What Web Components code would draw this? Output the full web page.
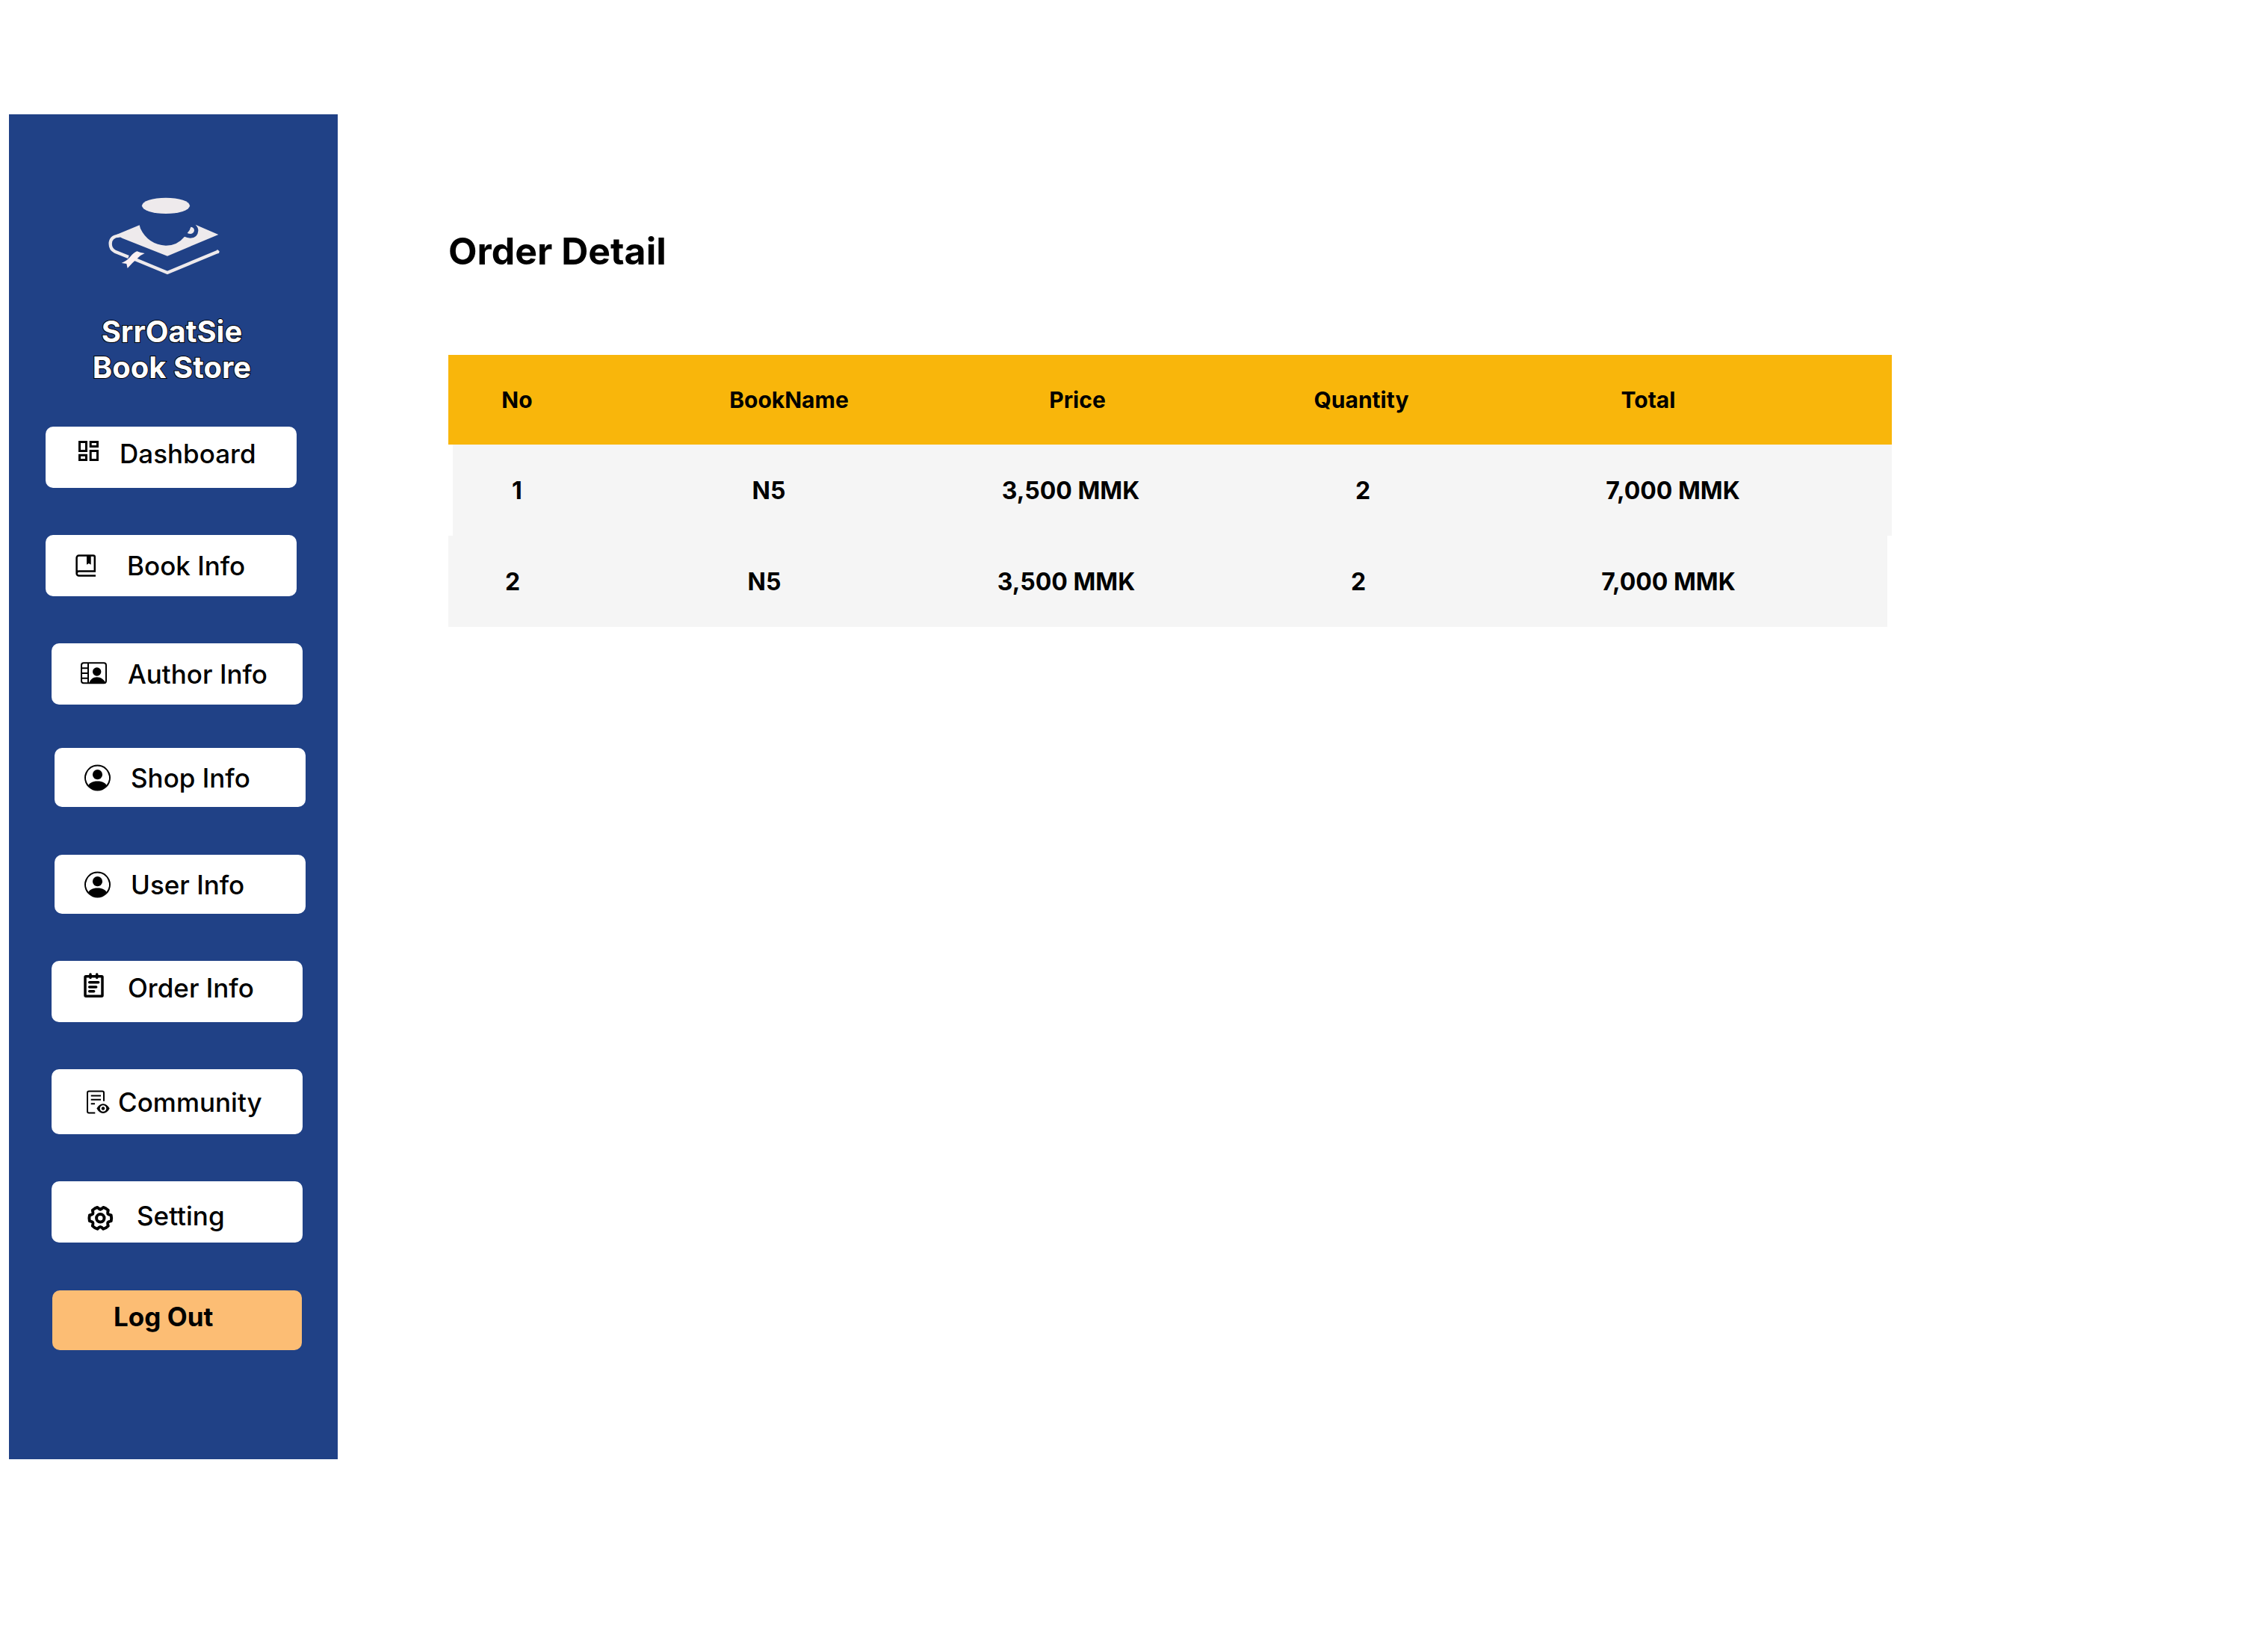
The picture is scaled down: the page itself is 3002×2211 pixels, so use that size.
<!DOCTYPE html>
<html lang="en">
<head>
<meta charset="utf-8">
<meta name="viewport" content="width=device-width, initial-scale=1">
<title>SrrOatSie Book Store – Order Detail</title>
<style>
  body { margin: 0; background: #fff; color: #000; font-family: Inter, "Liberation Sans", sans-serif; }
</style>
</head>
<body>
<store-app>
  <side-bar slot="side">
    <store-brand slot="brand">SrrOatSie<br>Book Store</store-brand>
    <nav-group>
      <nav-item icon="dashboard" shift="up" gap="s">Dashboard</nav-item>
      <nav-item icon="book" gap="l">Book Info</nav-item>
      <nav-item icon="author" indent="1">Author Info</nav-item>
    </nav-group>
    <nav-group class="people">
      <nav-item icon="person" indent="2" size="s">Shop Info</nav-item>
      <nav-item icon="person" indent="2" size="s">User Info</nav-item>
    </nav-group>
    <nav-group>
      <nav-item icon="order" indent="1" shift="up">Order Info</nav-item>
      <nav-item icon="community" indent="1" size="l" gap="xs">Community</nav-item>
      <nav-item icon="setting" indent="1" shift="down" gap="xl">Setting</nav-item>
    </nav-group>
    <log-out slot="foot">Log Out</log-out>
  </side-bar>
  <order-detail></order-detail>
</store-app>

<script>
const define = (name, html) => {
  const template = document.createElement('template');
  template.innerHTML = html;
  customElements.define(name, class extends HTMLElement {
    constructor() {
      super();
      this.attachShadow({ mode: 'open' }).append(template.content.cloneNode(true));
    }
  });
};

define('store-app', `
  <style>
    :host { display: flex; align-items: flex-start; padding: 153px 0 0 12px; }
    main { flex: 1; min-width: 0; padding: 153px 470px 0 148px; }
  </style>
  <slot name="side"></slot>
  <main><slot></slot></main>`);

define('side-bar', `
  <style>
    :host { display: block; box-sizing: border-box; flex: none; width: 440px; padding: 97px 0 146px; background: #204186; }
    nav { display: flex; flex-direction: column; gap: 63px; margin: 55px 0 64px; }
    ::slotted(.people) { --item-gap: 64px; margin-top: -5px; }
  </style>
  <slot name="brand"></slot>
  <nav aria-label="Main"><slot></slot></nav>
  <slot name="foot"></slot>`);

define('store-brand', `
  <style>
    :host { display: flex; flex-direction: column; align-items: center; gap: 40px; padding-right: 4px; }
    svg { display: block; width: 200px; height: 130px; }
    p { margin: 0; color: #fff; font-size: 40px; font-weight: 700; line-height: 48px; text-align: center;
        -webkit-text-stroke: 2px #000; paint-order: stroke fill; }
  </style>
  <svg viewBox="0 0 600 390" aria-hidden="true" fill="#eeeaec">
    <ellipse cx="276" cy="76" rx="96" ry="32"/>
    <path d="M170 154L78 192Q90 202 102 207L282 278L487 192L395 152Q406 163 406 176Q404 205 374 206Q361 205 351 200Q322 236 276 236Q205 232 174 168Z"/>
    <path d="M376 161Q390 163 390 175Q388 188 376 189Q368 189 362 186Q373 175 376 161Z"/>
    <path d="M92 197C64 196 53 211 53 229C53 245 61 255 72 260L126 282M150 290L282 345L485 260" fill="none" stroke="#eeeaec" stroke-width="13"/>
    <path d="M482 251L491 259L489 267L480 268Z"/>
    <path d="M160 259Q174 265 191 267Q175 273 161 288Q139 307 122 327L118 309L98 306Q117 299 132 282Q145 265 160 259Z" fill="#fdf1f2"/>
  </svg>
  <p><slot></slot></p>`);

define('nav-group', `
  <style>
    :host { display: flex; flex-direction: column; gap: var(--item-gap, 63px); }
  </style>
  <slot></slot>`);

/* Gear outline: six broad teeth with a shallow notch between each pair. */
const gear = () => {
  const tooth = [[-15, 14.9], [0, 14.9], [15, 14.9], [22, 12.6], [30, 11.6], [38, 12.6]];
  const pts = [];
  for (let k = 0; k < 6; k++) {
    for (const [a, r] of tooth) {
      const t = (k * 60 + a) * Math.PI / 180;
      pts.push((27.3 + r * Math.cos(t)).toFixed(1) + ',' + (23.3 + r * Math.sin(t)).toFixed(1));
    }
  }
  return pts.join(' ');
};

const icons = {
  dashboard: `<g fill="none" stroke="#000" stroke-width="3">
    <path d="M7.500 4.500h9v12h-9zM22.200 4.500h9.300v6h-9.300zM7.500 22.200h9v6.300h-9zM22.200 16.500h9.300v12h-9.300z"/></g>`,
  book: `<path d="M29 33.400H6.600a3 3 0 0 1-3-3V9.500a3 3 0 0 1 3-3H25.800a2 2 0 0 1 2 2V27.500H6.600a3 3 0 0 0-3 3" fill="none" stroke="#000" stroke-width="2.500"/>
    <path d="M17 6h5.700v12.700l-2.850-1.700L17 18.700z"/>`,
  author: `<rect x="2" y="5.200" width="33" height="27" rx="3" fill="none" stroke="#000" stroke-width="2"/>
    <path d="M11 5V32M2 12.300H11M2 19H11M2 25.700H11" fill="none" stroke="#000" stroke-width="2"/>
    <circle cx="22.700" cy="17" r="5.700"/>
    <path d="M12.300 32.500C13.500 27.500 17.500 24.300 22.700 24.300S32.500 27.500 34.500 32.500z"/>`,
  person: `<g transform="translate(2 2.500) scale(2.1875)"><path d="M11 6a3 3 0 1 1-6 0 3 3 0 0 1 6 0z"/>
    <path fill-rule="evenodd" d="M0 8a8 8 0 1 1 16 0A8 8 0 0 1 0 8zm8-7.100a7.100 7.100 0 0 0-5.500 11.500C3.200 11.200 4.805 10 8 10s4.800 1.200 5.500 2.400A7.100 7.100 0 0 0 8 .9z"/></g>`,
  order: `<g fill="none" stroke="#000" stroke-width="3.500" stroke-linecap="round" stroke-linejoin="round">
    <rect x="7" y="4.700" width="23" height="26.600" rx="1"/>
    <path d="M14 2V6.500M22.700 2V6.500M12.700 12.700H24.700M12.700 18.900H21.700M12.700 24.800H18.700"/></g>`,
  community: `<g fill="none" stroke="#000" stroke-width="2" stroke-linejoin="round">
    <path d="M20.300 34.500H12a2 2 0 0 1-2-2V7.500a2 2 0 0 1 2-2H30a2 2 0 0 1 2 2V18.800M14.700 11.500H28M14.700 16.800H28M14.700 22.200H20"/></g>
    <path d="M22.400 28.500C24.500 24.500 27.500 22.200 31 22.200S37.600 24.500 39.700 28.500C37.600 32.700 34.500 35 31 35S24.500 32.700 22.400 28.500z"/>
    <circle cx="31" cy="28.500" r="4.300" fill="#fff"/><circle cx="31" cy="28.500" r="2.200"/>`,
  setting: `<g fill="none" stroke="#000" stroke-linejoin="round"><polygon points="${gear()}" stroke-width="3.900"/>
    <circle cx="27.300" cy="23.300" r="5.200" stroke-width="4"/></g>`
};

const itemTemplate = document.createElement('template');
itemTemplate.innerHTML = `
  <style>
    :host { display: block; margin-left: 49px; --h: 82px; --gap: 20px; }
    :host([indent="1"]) { margin-left: 57px; }
    :host([indent="2"]) { margin-left: 61px; }
    :host([size="s"]) { --h: 79px; }
    :host([size="l"]) { --h: 87px; }
    :host([gap="xs"]) { --gap: 7px; }
    :host([gap="s"]) { --gap: 17px; }
    :host([gap="l"]) { --gap: 27px; }
    :host([gap="xl"]) { --gap: 32px; }
    a { display: flex; align-items: center; gap: var(--gap); box-sizing: border-box; width: 336px; height: var(--h);
        padding-left: 38px; border-radius: 10px; background: #fff; color: #000; text-decoration: none;
        font-size: 35px; font-weight: 500; line-height: 44px; }
    :host([shift="up"]) a { padding-bottom: 10px; }
    :host([shift="down"]) a { padding-top: 10px; }
    svg { flex: none; width: 44px; height: 40px; overflow: visible; }
  </style>
  <a href="#"><svg viewBox="0 0 44 40" aria-hidden="true"></svg><span><slot></slot></span></a>`;

customElements.define('nav-item', class extends HTMLElement {
  constructor() {
    super();
    this.attachShadow({ mode: 'open' }).append(itemTemplate.content.cloneNode(true));
  }
  connectedCallback() {
    this.shadowRoot.querySelector('svg').innerHTML = icons[this.getAttribute('icon')] || '';
  }
});

define('log-out', `
  <style>
    :host { display: block; margin-left: 58px; }
    button { display: block; box-sizing: border-box; width: 334px; height: 80px; padding: 0 0 10px 82px; border: 0;
             border-radius: 10px; background: #fcbd74; color: #000; font: 700 35px/44px Inter, "Liberation Sans", sans-serif;
             text-align: left; }
  </style>
  <button type="button"><slot></slot></button>`);

define('order-detail', `
  <style>
    :host { display: block; }
    h1 { margin: 0 0 109px; font-size: 50px; font-weight: 700; line-height: 60px; }
    table, thead, tbody { display: block; }
    tr { display: grid; align-items: center; box-sizing: border-box; }
    th, td { padding: 0; text-align: center; font-weight: 700; white-space: nowrap; }
    thead tr { height: 120px; padding-right: 208px; background: #f9b60b; font-size: 30px; line-height: 36px;
               grid-template-columns: 184fr 544fr 228fr 532fr 236fr; }
    tbody tr { height: 122px; padding: 2px 116px 0 0; background: #f5f5f5; font-size: 32px; line-height: 40px;
               grid-template-columns: 172fr 502fr 306fr 476fr 354fr; }
    tbody tr:nth-child(odd) { margin-left: 6px; }
    tbody tr:nth-child(even) { margin-right: 6px; }
  </style>
  <h1>Order Detail</h1>
  <table>
    <thead>
      <tr><th scope="col">No</th><th scope="col">BookName</th><th scope="col">Price</th><th scope="col">Quantity</th><th scope="col">Total</th></tr>
    </thead>
    <tbody>
      <tr><td>1</td><td>N5</td><td>3,500 MMK</td><td>2</td><td>7,000 MMK</td></tr>
      <tr><td>2</td><td>N5</td><td>3,500 MMK</td><td>2</td><td>7,000 MMK</td></tr>
    </tbody>
  </table>`);
</script>
</body>
</html>
